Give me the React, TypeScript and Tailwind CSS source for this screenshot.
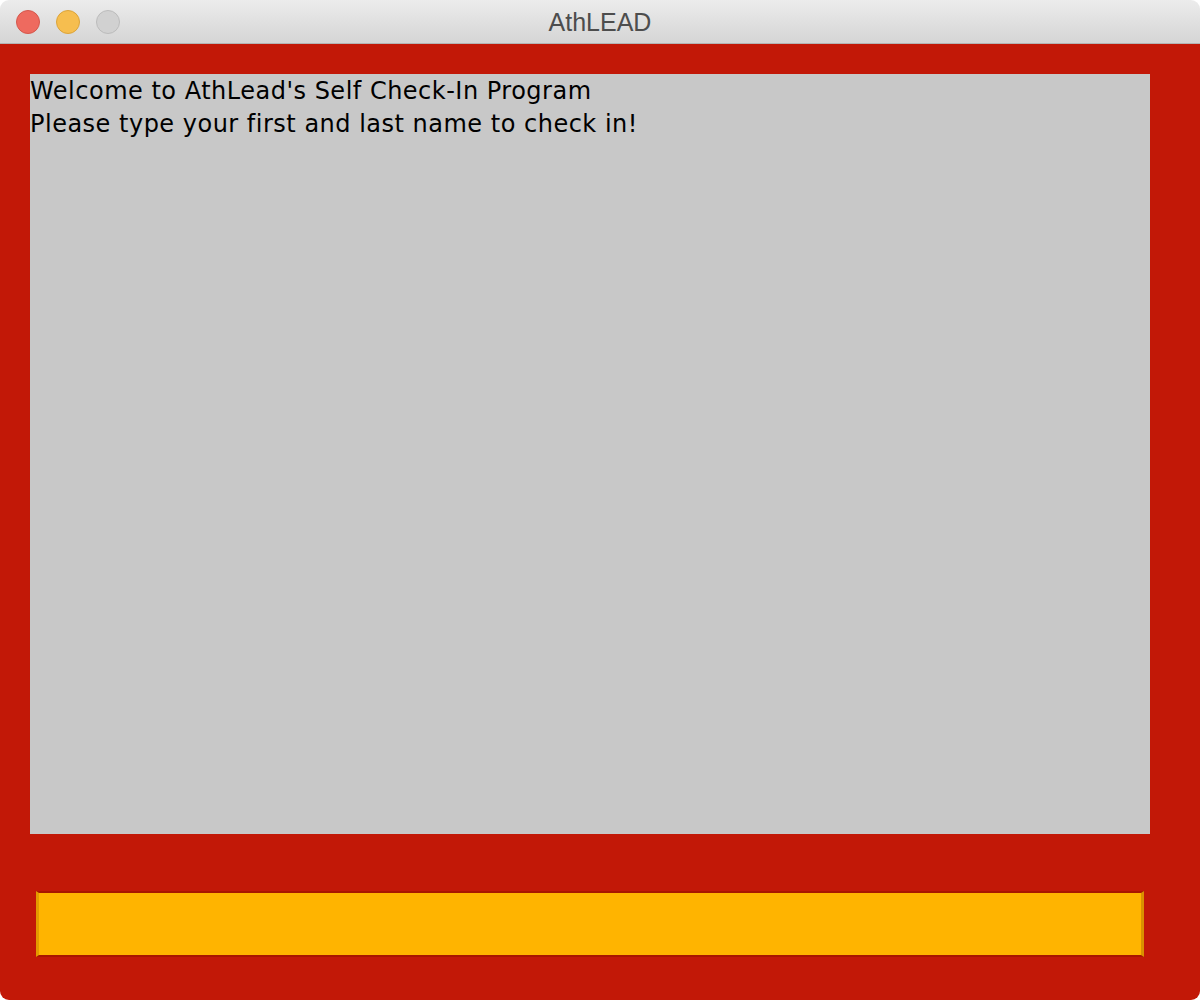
export default function App() {
  return (
    <div className="w-[1200px] h-[1000px] bg-white">
      <div className="flex flex-col w-full h-full rounded-[9px] overflow-hidden">
        {/* Title bar */}
        <div className="relative flex items-center justify-center h-[44px] shrink-0 bg-gradient-to-b from-[#ececec] to-[#d5d5d5] border-b border-[#b4b4b4]">
          <div className="absolute left-[16px] top-[10px] flex gap-[16px]">
            <span className="w-[24px] h-[24px] rounded-full bg-[#ee6a5f] border border-[#d5574c]" />
            <span className="w-[24px] h-[24px] rounded-full bg-[#f6be4f] border border-[#dca43a]" />
            <span className="w-[24px] h-[24px] rounded-full bg-[#d1d1d1] border border-[#bcbcbc]" />
          </div>
          <span className="text-[25px] leading-none pt-[2px] text-[#4d4d4d] font-['Liberation_Sans',sans-serif]">
            AthLEAD
          </span>
        </div>

        {/* Content */}
        <div className="flex flex-col flex-1 bg-[#c21807] pl-[30px] pr-[50px] pt-[30px]">
          <div className="h-[760px] bg-[#c8c8c8] text-black text-[24px] leading-[33px] font-['DejaVu_Sans',sans-serif] tracking-[0.5px] pt-[1px]">
            <p>Welcome to AthLead's Self Check-In Program</p>
            <p>Please type your first and last name to check in!</p>
          </div>
          <div className="pl-[6px] pr-[6px] pt-[57px]">
            <input
              type="text"
              className="block w-full h-[66px] bg-[#ffb400] border-t-2 border-b-2 border-[#a81600] border-l-[3px] border-r-[3px] border-l-[#e39a00] border-r-[#d99000] outline-none"
            />
          </div>
        </div>
      </div>
    </div>
  );
}
